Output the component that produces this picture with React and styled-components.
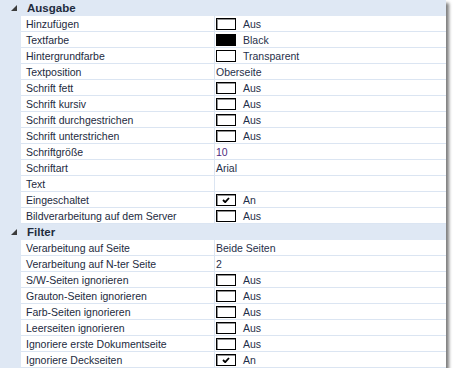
import React from "react";
import styled, { createGlobalStyle } from "styled-components";

const GlobalStyle = createGlobalStyle`
  html, body {
    margin: 0;
    padding: 0;
    background: #fff;
  }
  body {
    font-family: "Liberation Sans", Arial, sans-serif;
    font-size: 10.5px;
  }
`;

const Frame = styled.div`
  width: 446px;
  box-shadow: 3px 3px 3px rgba(0, 0, 0, 0.5);
  background: #fff;
`;

const Grid = styled.div`
  display: grid;
  grid-template-columns: 21px 194px 1fr;
  background: #dfe8f4;
`;

const CategoryRow = styled.div`
  grid-column: 1 / -1;
  display: flex;
  align-items: center;
  height: 16px;
  background: #dfe8f4;
`;

const Toggle = styled.span`
  width: 26px;
  display: flex;
  justify-content: center;
  padding-left: 1px;
`;

const CategoryTitle = styled.span`
  font-weight: bold;
  font-size: 11.5px;
  color: #1e2b3e;
`;

const Cell = styled.div`
  height: 15px;
  border-bottom: 1px solid #dbe5f2;
  background: #fff;
  display: flex;
  align-items: center;
  white-space: nowrap;
  overflow: hidden;
`;

const Gutter = styled.div`
  background: #dfe8f4;
`;

const Label = styled(Cell)`
  padding-left: 5px;
  color: #1c2a40;
  border-right: 1px solid #dbe5f2;
`;

const Value = styled(Cell)`
  padding-left: 1px;
  color: ${(p) => p.$color || "#1f2f4a"};
  gap: 7px;
`;

const Box = styled.span`
  width: 18px;
  height: 10px;
  border: 1px solid #000;
  background: ${(p) => (p.$fill ? p.$fill : "#fff")};
  box-shadow: ${(p) => (p.$sunken ? "inset 1px 1px 0 #8f8f8f" : "none")};
  display: flex;
  align-items: center;
  justify-content: center;
  flex-shrink: 0;
`;

const Arrow = () => (
  <svg width="6" height="6" viewBox="0 0 6 6">
    <polygon points="6,0 6,6 0,6" fill="#3c3c3c" />
  </svg>
);

const Check = () => (
  <svg width="8" height="6" viewBox="0 0 8 6">
    <path d="M1 3 L3.2 5.2 L7 1" stroke="#000" strokeWidth="1.8" fill="none" />
  </svg>
);

const sections = [
  {
    title: "Ausgabe",
    rows: [
      { label: "Hinzufügen", box: "off", value: "Aus" },
      { label: "Textfarbe", box: "black", value: "Black" },
      { label: "Hintergrundfarbe", box: "color", value: "Transparent" },
      { label: "Textposition", value: "Oberseite" },
      { label: "Schrift fett", box: "off", value: "Aus" },
      { label: "Schrift kursiv", box: "off", value: "Aus" },
      { label: "Schrift durchgestrichen", box: "off", value: "Aus" },
      { label: "Schrift unterstrichen", box: "off", value: "Aus" },
      { label: "Schriftgröße", value: "10", color: "#4b2a7e" },
      { label: "Schriftart", value: "Arial" },
      { label: "Text", value: "" },
      { label: "Eingeschaltet", box: "on", value: "An" },
      { label: "Bildverarbeitung auf dem Server", box: "off", value: "Aus" },
    ],
  },
  {
    title: "Filter",
    rows: [
      { label: "Verarbeitung auf Seite", value: "Beide Seiten" },
      { label: "Verarbeitung auf N-ter Seite", value: "2" },
      { label: "S/W-Seiten ignorieren", box: "off", value: "Aus" },
      { label: "Grauton-Seiten ignorieren", box: "off", value: "Aus" },
      { label: "Farb-Seiten ignorieren", box: "off", value: "Aus" },
      { label: "Leerseiten ignorieren", box: "off", value: "Aus" },
      { label: "Ignoriere erste Dokumentseite", box: "off", value: "Aus" },
      { label: "Ignoriere Deckseiten", box: "on", value: "An" },
    ],
  },
];

const renderBox = (kind) => {
  if (!kind) return null;
  if (kind === "black") return <Box $fill="#000" />;
  if (kind === "color") return <Box />;
  return <Box $sunken>{kind === "on" && <Check />}</Box>;
};

export default function App() {
  return (
    <>
      <GlobalStyle />
      <Frame>
        <Grid>
          {sections.map((s) => (
            <React.Fragment key={s.title}>
              <CategoryRow>
                <Toggle>
                  <Arrow />
                </Toggle>
                <CategoryTitle>{s.title}</CategoryTitle>
              </CategoryRow>
              {s.rows.map((r) => (
                <React.Fragment key={r.label}>
                  <Gutter />
                  <Label>{r.label}</Label>
                  <Value $color={r.color}>
                    {renderBox(r.box)}
                    {r.value}
                  </Value>
                </React.Fragment>
              ))}
            </React.Fragment>
          ))}
        </Grid>
      </Frame>
    </>
  );
}
